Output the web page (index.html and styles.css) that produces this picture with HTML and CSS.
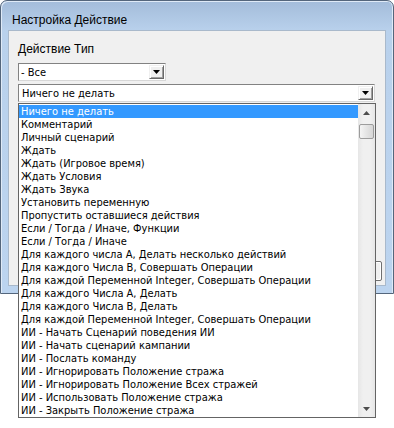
FILE: index.html
```html
<!DOCTYPE html>
<html lang="ru">
<head>
    <meta charset="UTF-8">
    <meta name="viewport" content="width=device-width, initial-scale=1.0">
    <title>Настройка Действие</title>
    <link rel="stylesheet" href="styles.css">
</head>
<body>
    <div class="window">
        <div class="titlebar">Настройка Действие</div>
        <div class="client">
            <div class="field-label">Действие Тип</div>
            <div class="combo combo-type">
                <span class="combo-text">- Все</span>
                <span class="combo-btn"><svg width="7" height="4" viewBox="0 0 7 4"><path d="M0 0h7L3.5 4z" fill="#000"/></svg></span>
            </div>
            <div class="combo combo-action">
                <span class="combo-text">Ничего не делать</span>
                <span class="combo-btn"><svg width="7" height="4" viewBox="0 0 7 4"><path d="M0 0h7L3.5 4z" fill="#000"/></svg></span>
            </div>
            <div class="buttons">
                <button class="btn">Отмена</button>
            </div>
        </div>
    </div>

    <div class="dropdown">
        <ul class="items">
            <li class="selected">Ничего не делать</li>
            <li>Комментарий</li>
            <li>Личный сценарий</li>
            <li>Ждать</li>
            <li>Ждать (Игровое время)</li>
            <li>Ждать Условия</li>
            <li>Ждать Звука</li>
            <li>Установить переменную</li>
            <li>Пропустить оставшиеся действия</li>
            <li>Если / Тогда / Иначе, Функции</li>
            <li>Если / Тогда / Иначе</li>
            <li>Для каждого числа A, Делать несколько действий</li>
            <li>Для каждого Числа B, Совершать Операции</li>
            <li>Для каждой Переменной Integer, Совершать Операции</li>
            <li>Для каждого Числа A, Делать</li>
            <li>Для каждого Числа B, Делать</li>
            <li>Для каждой Переменной Integer, Совершать Операции</li>
            <li>ИИ - Начать Сценарий поведения ИИ</li>
            <li>ИИ - Начать сценарий кампании</li>
            <li>ИИ - Послать команду</li>
            <li>ИИ - Игнорировать Положение стража</li>
            <li>ИИ - Игнорировать Положение Всех стражей</li>
            <li>ИИ - Использовать Положение стража</li>
            <li>ИИ - Закрыть Положение стража</li>
        </ul>
        <div class="scrollbar">
            <div class="sb-arrow"><svg width="7" height="4" viewBox="0 0 7 4"><path d="M0 4h7L3.5 0z" fill="#4d4d4d"/></svg></div>
            <div class="sb-track"><div class="sb-thumb"></div></div>
            <div class="sb-arrow"><svg width="7" height="4" viewBox="0 0 7 4"><path d="M0 0h7L3.5 4z" fill="#4d4d4d"/></svg></div>
        </div>
    </div>
</body>
</html>
```

FILE: styles.css
```css
body {
    margin: 0;
    background: #ffffff;
    font-family: "Liberation Sans", Arial, sans-serif;
}
.window {
    width: 394px;
    height: 294px;
    box-sizing: border-box;
    border: 1px solid #54667c;
    border-radius: 7px 7px 0 0;
    background: linear-gradient(#a3bcda, #b9d1ec 30px, #bcd4ef);
    padding: 0 7px 7px;
    display: flex;
    flex-direction: column;
    box-shadow: inset 1px 1px 0 #dfeaf7, inset -1px 0 0 #dfeaf7;
}
.titlebar {
    height: 29px;
    flex: none;
    font-size: 12px;
    line-height: 14px;
    padding: 12px 0 0 4px;
    box-sizing: border-box;
    color: #000;
}
.client {
    flex: 1;
    background: #f0f0f0;
    border: 1px solid #a9b9cb;
    padding: 11px 0 0 9px;
    display: flex;
    flex-direction: column;
    position: relative;
}
.field-label {
    font-size: 12px;
    line-height: 15px;
    color: #000;
}
.combo {
    height: 18px;
    box-sizing: border-box;
    background: #fff;
    border: 1px solid;
    border-color: #828282 #d7d7d7 #d7d7d7 #828282;
    display: flex;
    align-items: center;
    justify-content: space-between;
    font-family: "DejaVu Sans Condensed", "DejaVu Sans", sans-serif;
    font-size: 11px;
    color: #000;
}
.combo-type {
    width: 148px;
    margin-top: 6px;
}
.combo-action {
    width: 357px;
    margin-top: 3px;
}
.combo-text {
    padding-left: 2px;
}
.combo-action .combo-text {
    padding-left: 3px;
}
.combo-btn {
    width: 15px;
    height: 14px;
    margin-right: 1px;
    box-sizing: border-box;
    background: #f0f0f0;
    border: 1px solid;
    border-color: #f0f0f0 #696969 #696969 #f0f0f0;
    box-shadow: inset 1px 1px 0 #fff, inset -1px -1px 0 #a0a0a0;
    display: flex;
    align-items: center;
    justify-content: center;
}
.buttons {
    margin-top: auto;
    display: flex;
    justify-content: flex-end;
    padding: 0 3px 4px 0;
}
.btn {
    width: 75px;
    height: 20px;
    font-family: "Liberation Sans", Arial, sans-serif;
    font-size: 11px;
    background: #f0f0f0;
    border: 1px solid #707070;
    border-radius: 2px;
    box-shadow: inset 1px 1px 0 #fff, inset -1px -1px 0 #fff;
}
.dropdown {
    position: absolute;
    left: 18px;
    top: 103px;
    width: 358px;
    height: 315px;
    box-sizing: border-box;
    border: 1px solid #646464;
    background: #fff;
    display: flex;
}
.items {
    list-style: none;
    margin: 0;
    padding: 1px 0 0;
    flex: 1;
    font-family: "DejaVu Sans Condensed", "DejaVu Sans", sans-serif;
    font-size: 11px;
    color: #000;
}
.items li {
    height: 13px;
    line-height: 13px;
    padding-left: 2px;
    white-space: nowrap;
}
.items li.selected {
    background: #3399ff;
    color: #fff;
}
.scrollbar {
    width: 17px;
    flex: none;
    display: flex;
    flex-direction: column;
    background: linear-gradient(90deg, #e6e6e6, #f0f0f0 30%, #f0f0f0 70%, #e6e6e6);
}
.sb-arrow {
    height: 17px;
    display: flex;
    align-items: center;
    justify-content: center;
    flex: none;
}
.sb-track {
    flex: 1;
    padding-top: 3px;
}
.sb-thumb {
    height: 15px;
    margin: 0 1px;
    box-sizing: border-box;
    border: 1px solid #9c9c9c;
    border-radius: 2px;
    background: linear-gradient(90deg, #f4f4f4, #e4e4e4 50%, #d6d6d6);
}
```
